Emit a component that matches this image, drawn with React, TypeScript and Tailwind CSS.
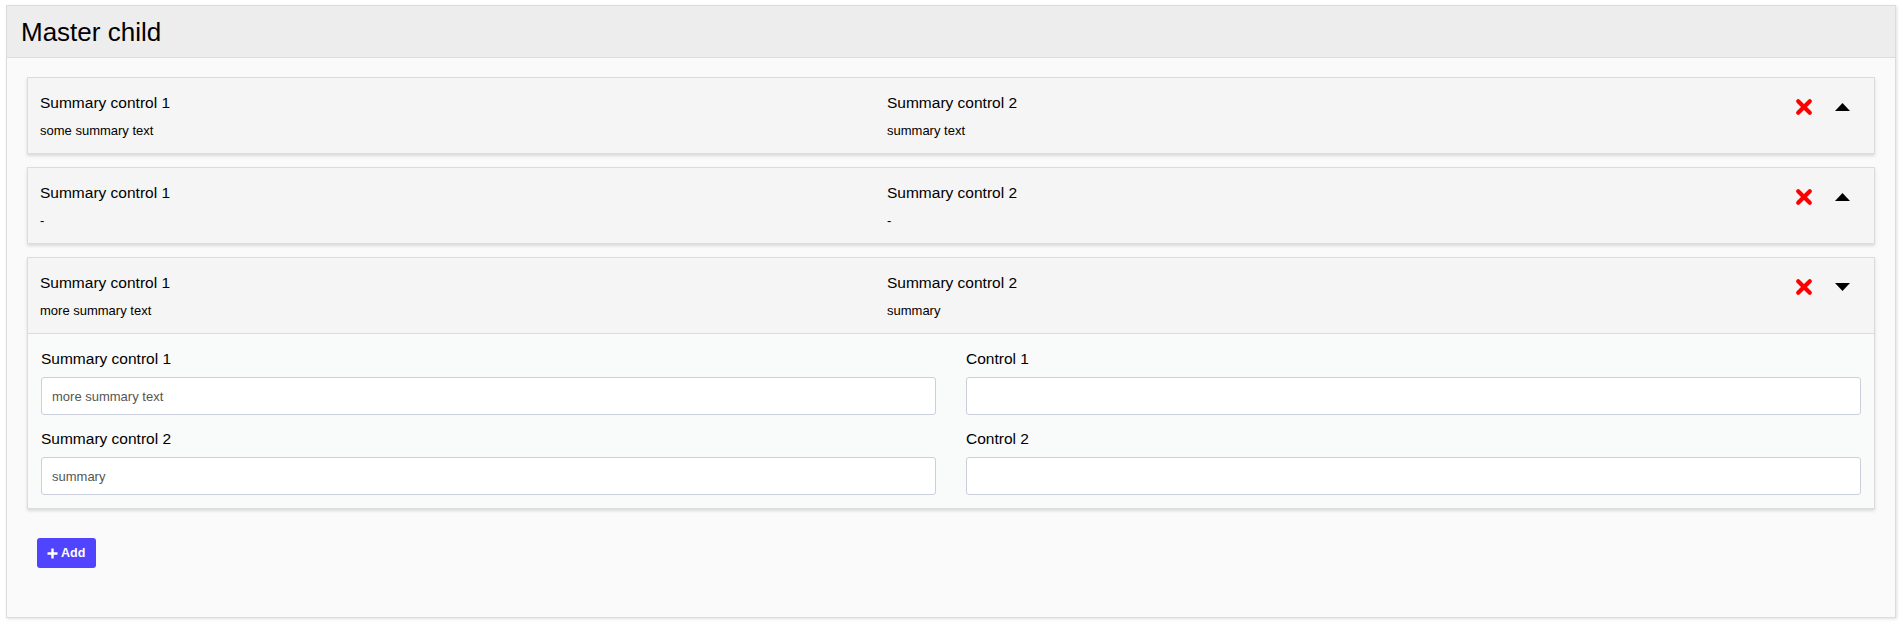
const rows = [
  { a: "some summary text", b: "summary text", open: false },
  { a: "-", b: "-", open: false },
  { a: "more summary text", b: "summary", open: true },
];

function RemoveIcon() {
  return (
    <svg width="18" height="18" viewBox="0 0 18 18" className="block">
      <path d="M3.2 3.2L14.8 14.8M14.8 3.2L3.2 14.8" stroke="#ff0000" strokeWidth="4.2" strokeLinecap="round" fill="none" />
    </svg>
  );
}

function Caret({ down }: { down: boolean }) {
  return (
    <svg width="15" height="8" viewBox="0 0 15 8" className="block">
      <polygon points={down ? "0,0 15,0 7.5,8" : "0,8 15,8 7.5,0"} fill="#000" />
    </svg>
  );
}

function Field({ label, value }: { label: string; value: string }) {
  return (
    <div className="flex flex-col">
      <label className="mb-[8px] text-[15.5px] leading-[20px] text-black">{label}</label>
      <input
        readOnly
        value={value}
        className="h-[38px] w-full rounded-[3px] border border-[#c9cfdb] bg-white px-[10px] text-[13px] text-[#555] outline-none"
      />
    </div>
  );
}

export default function App() {
  return (
    <div className="min-h-[626px] bg-white pl-[6px] pr-[7px] pt-[5px] font-['Liberation_Sans',Arial,sans-serif]">
      <section className="border border-[#dcdcdc] bg-[#fafafa] shadow-[1px_1px_3px_rgba(0,0,0,0.12)]">
        <header className="flex h-[52px] items-center border-b border-[#dcdcdc] bg-[#ededed] pl-[14px]">
          <h1 className="text-[26px] leading-[30px] text-black">Master child</h1>
        </header>

        <div className="px-[20px] pb-[49px] pt-[19px]">
          {rows.map((row, i) => (
            <div key={i} className="mb-[13px] border border-[#dcdcdc] shadow-[0_2px_3px_rgba(0,0,0,0.13)]">
              <div className={`flex bg-[#f5f5f5] px-[12px] pb-[12px] pt-[15px] ${row.open ? "border-b border-[#dcdcdc]" : ""}`}>
                <div className="w-[847px] shrink-0">
                  <div className="text-[15.5px] leading-[20px] text-black">Summary control 1</div>
                  <div className="mt-[8px] text-[13px] leading-[20px] text-black">{row.a}</div>
                </div>
                <div className="w-[847px] shrink-0">
                  <div className="text-[15.5px] leading-[20px] text-black">Summary control 2</div>
                  <div className="mt-[8px] text-[13px] leading-[20px] text-black">{row.b}</div>
                </div>
                <div className="flex h-[27px] flex-1 items-center justify-end gap-[22px] pr-[12px]">
                  <button className="cursor-pointer">
                    <RemoveIcon />
                  </button>
                  <button className="cursor-pointer">
                    <Caret down={row.open} />
                  </button>
                </div>
              </div>
              {row.open && (
                <div className="grid grid-cols-2 gap-x-[30px] gap-y-[14px] bg-[#f9fafa] px-[13px] pb-[13px] pt-[15px]">
                  <Field label="Summary control 1" value="more summary text" />
                  <Field label="Control 1" value="" />
                  <Field label="Summary control 2" value="summary" />
                  <Field label="Control 2" value="" />
                </div>
              )}
            </div>
          ))}

          <button className="ml-[10px] mt-[29px] flex h-[30px] items-center gap-[3px] rounded-[3px] bg-[#5044ff] pl-[10px] pr-[11px] text-[12.5px] font-bold text-white">
            <svg width="11" height="11" viewBox="0 0 11 11" className="block">
              <path d="M5.5 0.5V10.5M0.5 5.5H10.5" stroke="#fff" strokeWidth="2.4" fill="none" />
            </svg>
            Add
          </button>
        </div>
      </section>
    </div>
  );
}
